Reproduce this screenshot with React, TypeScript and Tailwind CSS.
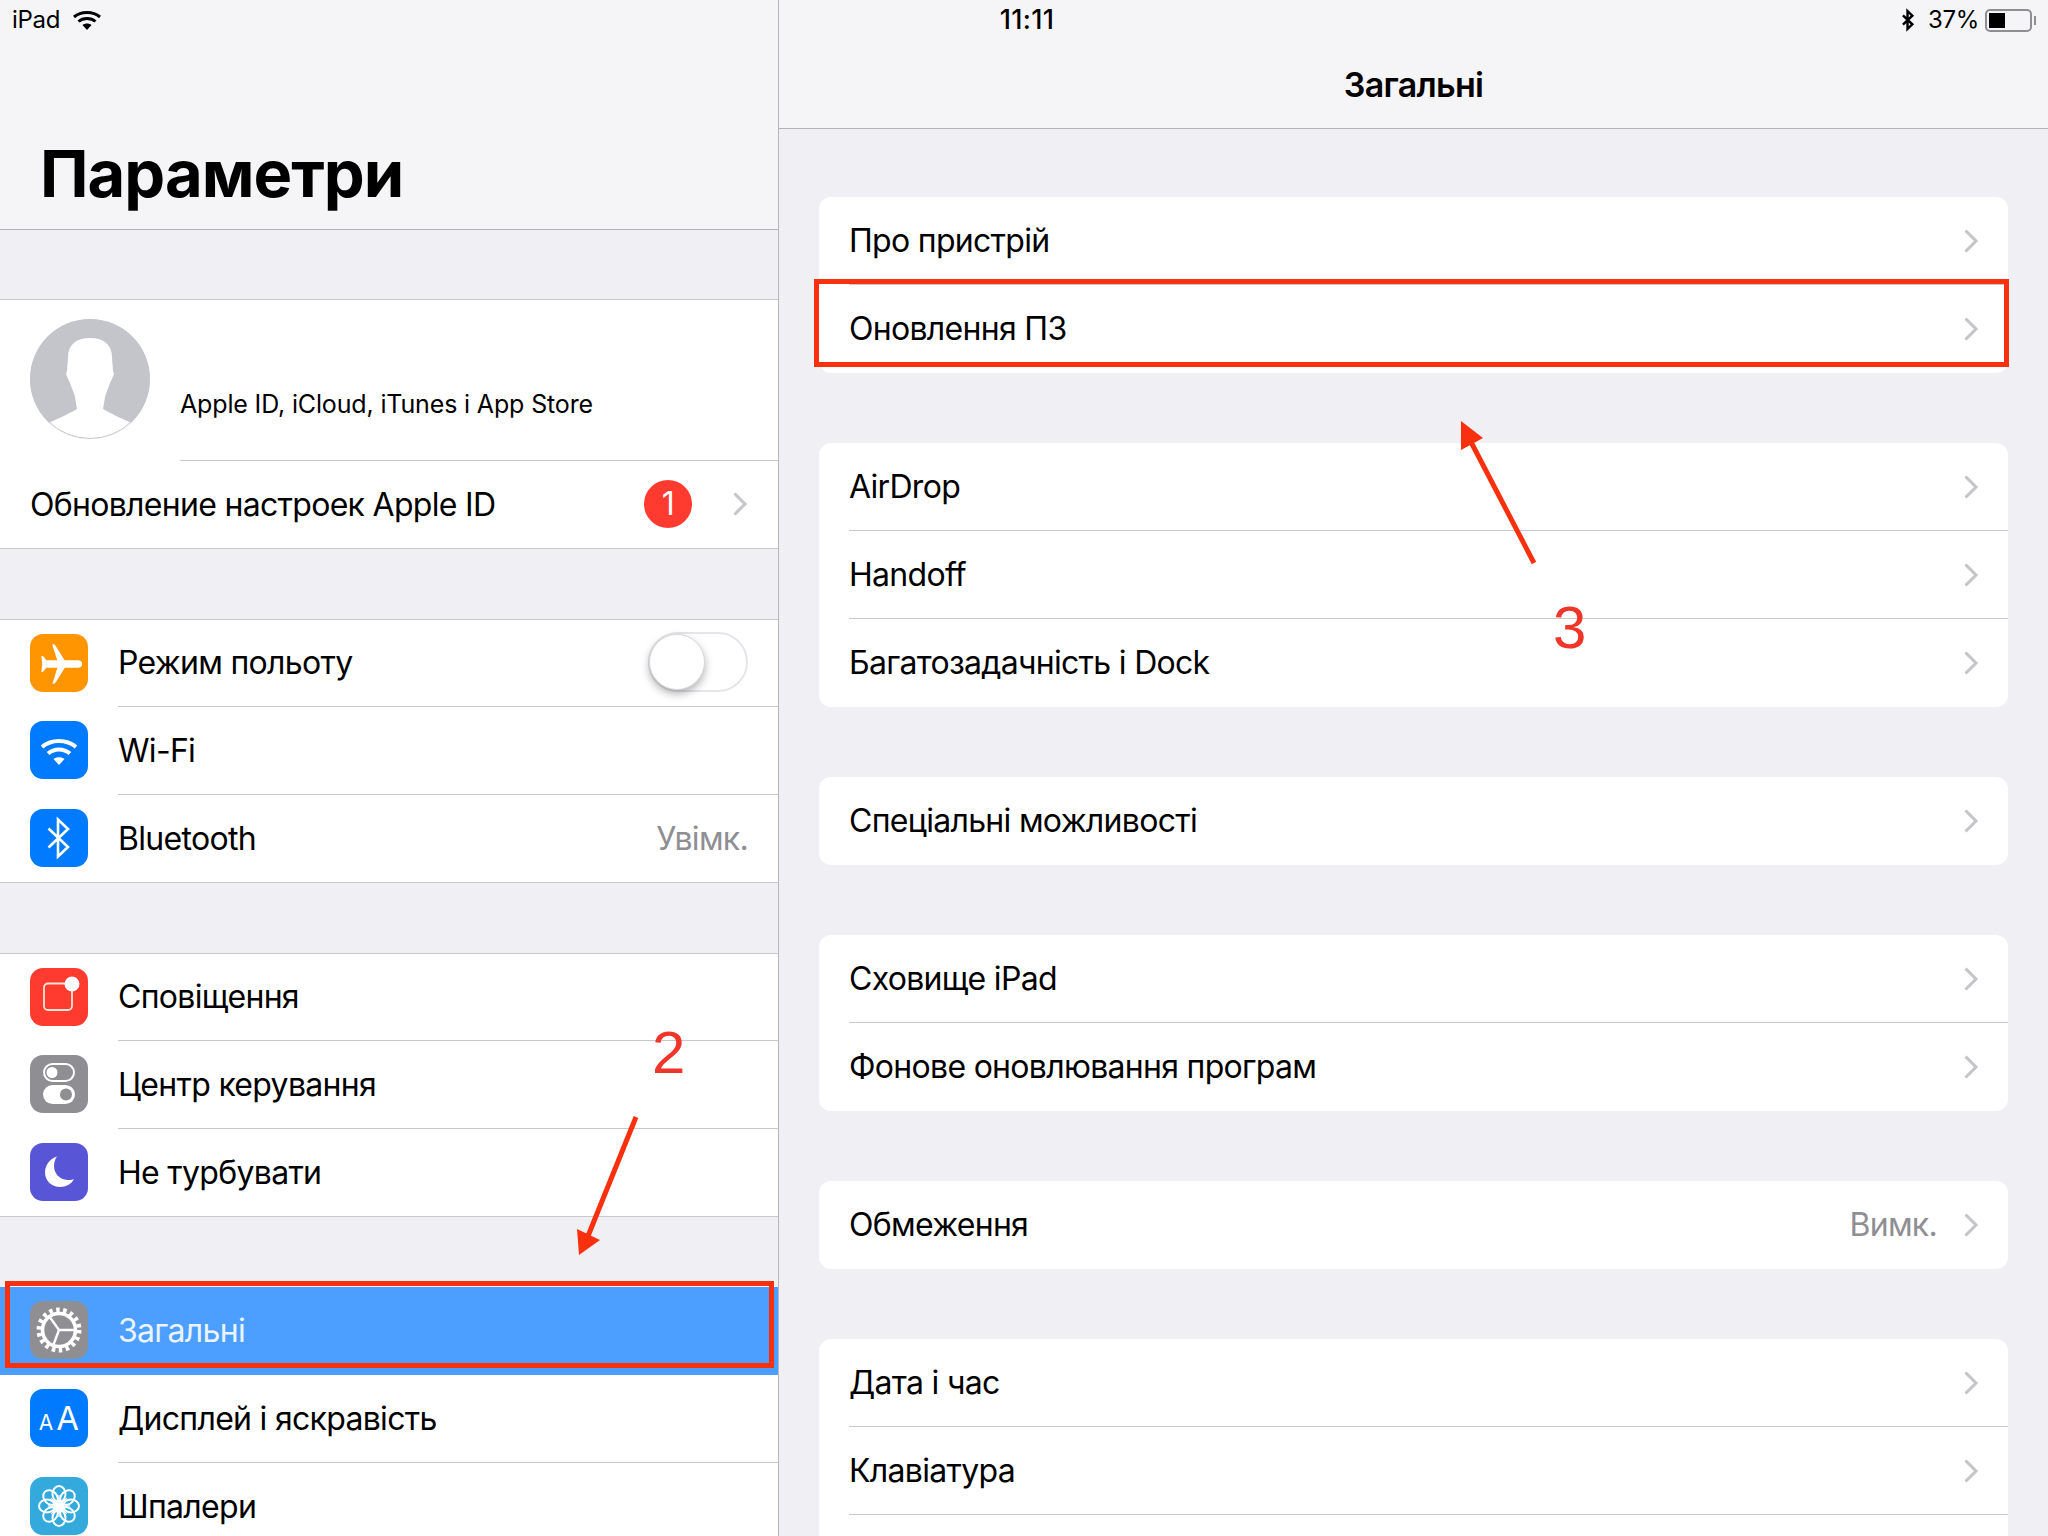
const Chevron = ({ className = "" }: { className?: string }) => (
  <svg width="16" height="26" viewBox="0 0 16 26" fill="none" className={className}>
    <path d="M2.5 2.5 13 13 2.5 23.5" stroke="#c4c4c9" strokeWidth="3" />
  </svg>
);

function Tile({ bg, children }: { bg: string; children: React.ReactNode }) {
  return (
    <div className={`w-[58px] h-[58px] mb-[2px] rounded-[13px] shrink-0 flex items-center justify-center ${bg}`}>
      {children}
    </div>
  );
}

const AirplaneIcon = () => (
  <svg width="58" height="58" viewBox="0 0 58 58" fill="#fff">
    <path d="M52 29c0-1.7-1.9-2.7-4-2.7H34.6L25.3 11.2c-.3-.5-.9-.8-1.5-.8h-1.6l5 15.9H16.4l-3.2-4-.3-.4h-1.6l1 8.1-1 8.1h1.6l3.5-4.4h11l-5 15.9h1.6c.6 0 1.2-.3 1.5-.8l9.3-15.1H48c2.1 0 4-1 4-2.7z" />
  </svg>
);

const WifiIcon = () => (
  <svg width="58" height="58" viewBox="0 0 58 58" fill="none" stroke="#fff" strokeWidth="4">
    <path d="M12 26c9.500-8 24.500-8 34 0" />
    <path d="M18 32.500c6.500-5.500 15.500-5.500 22 0" />
    <path d="M23.500 38 29 44l5.500-6c-3-2.500-8-2.500-11 0z" fill="#fff" stroke="none" />
  </svg>
);

const BluetoothIcon = ({ color = "#fff", size = 58, width = 2.6 }: { color?: string; size?: number; width?: number }) => (
  <svg width={size} height={size} viewBox="0 0 58 58" fill="none" stroke={color} strokeWidth={width}>
    <path d="M18.500 19.500 38 38 28 47.500V10.500L38 20 18.500 38.500" />
  </svg>
);

const BellIcon = () => (
  <svg width="58" height="58" viewBox="0 0 58 58" fill="none">
    <path d="M36 15.500H18a4 4 0 0 0-4 4V38a4 4 0 0 0 4 4h20a4 4 0 0 0 4-4V21" stroke="#ffe4d8" strokeWidth="1.800" />
    <circle cx="42" cy="16" r="7.500" fill="#fff" />
  </svg>
);

const ControlIcon = () => (
  <svg width="58" height="58" viewBox="0 0 58 58" fill="none">
    <rect x="14" y="9" width="30" height="17" rx="8.500" stroke="#fff" strokeWidth="2" />
    <circle cx="22" cy="17.500" r="5.500" fill="#fff" />
    <rect x="13" y="30" width="32" height="19" rx="9.500" fill="#fff" />
    <circle cx="36" cy="39.500" r="6" fill="#8e8e93" />
  </svg>
);

const MoonIcon = () => (
  <svg width="58" height="58" viewBox="0 0 58 58" fill="#fff">
    <path d="M27 13.500C19.500 16 15 22.500 15 29.500c0 9 7.500 14.500 15 14.500 6 0 11.500-2.800 14-8-2 1-4 1.200-6.500 1-8-.5-13.500-6.500-13.500-14 0-3.500 1-7 3-9.500z" />
  </svg>
);

const GearIcon = () => (
  <svg width="58" height="58" viewBox="0 0 58 58" fill="none" stroke="#fff">
    <circle cx="29" cy="29" r="19.500" strokeWidth="6" strokeDasharray="3.400 3.410" />
    <circle cx="29" cy="29" r="16.500" strokeWidth="3.600" />
    <path d="M29 29H46M29 29 19 15M29 29 23 45" strokeWidth="2.400" />
  </svg>
);

const FlowerIcon = () => (
  <svg width="58" height="58" viewBox="0 0 58 58" fill="none" stroke="#fff" strokeWidth="2">
    {[0, 45, 90, 135, 180, 225, 270, 315].map((a) => (
      <g key={a} transform={`rotate(${a} 29 29)`}>
        <ellipse cx="29" cy="17" rx="6.500" ry="8" />
        <path d="M29 25V18" strokeWidth="1.200" />
      </g>
    ))}
    <circle cx="29" cy="29" r="3.500" fill="#fff" stroke="none" />
  </svg>
);

const AaIcon = () => (
  <div className="flex items-baseline text-white leading-none tracking-normal">
    <span className="text-[21px]">A</span>
    <span className="text-[33px] ml-[3px]">A</span>
  </div>
);

function SideRow({
  icon,
  label,
  right,
  h = "h-[88px]",
  last = false,
  selected = false,
}: {
  icon: React.ReactNode;
  label: string;
  right?: React.ReactNode;
  h?: string;
  last?: boolean;
  selected?: boolean;
}) {
  return (
    <div className={`${h} flex items-center pl-[30px] ${selected ? "bg-[#4d9fff]" : ""}`}>
      {icon}
      <div
        className={`ml-[30px] flex-1 h-full flex items-center justify-between pr-[30px] ${
          last ? "" : "border-b border-[#c8c7cc]"
        }`}
      >
        <span className={selected ? "text-[#eaf4ff]" : ""}>{label}</span>
        {right}
      </div>
    </div>
  );
}

function Card({ rows }: { rows: { label: string; value?: string }[] }) {
  return (
    <div className="bg-white rounded-[12px] overflow-hidden">
      {rows.map((r, i) => (
        <div key={i} className="h-[88px] pl-[30px]">
          <div
            className={`h-full flex items-center justify-between pr-[29px] ${
              i < rows.length - 1 ? "border-b border-[#c8c7cc]" : ""
            }`}
          >
            <span>{r.label}</span>
            <div className="flex items-center gap-[26px]">
              {r.value && <span className="text-[#8e8e93]">{r.value}</span>}
              {r.label && <Chevron />}
            </div>
          </div>
        </div>
      ))}
    </div>
  );
}

export default function App() {
  return (
    <div className="relative w-[2048px] h-[1536px] overflow-hidden flex bg-[#efeff4] text-black text-[32px] tracking-[-0.7px] font-['Inter','Noto_Sans',sans-serif]">
      {/* status bar */}
      <div className="absolute top-0 left-0 right-0 h-[40px] grid grid-cols-3 items-center pl-[12px] pr-[12px] text-[24px] tracking-[-0.3px]">
        <div className="flex items-center gap-[12px]">
          <span>iPad</span>
          <svg width="30" height="24" viewBox="0 0 30 24" fill="none" stroke="#000" strokeWidth="3">
            <path d="M2 9c7-6 19-6 26 0" />
            <path d="M6.500 13.500c4.500-4 12.500-4 17 0" />
            <path d="M10.500 17 15 22l4.500-5c-2.500-2-6.500-2-9 0z" fill="#000" stroke="none" />
          </svg>
        </div>
        <span className="font-medium text-[27px] tracking-[0.3px] pl-[313px]">11:11</span>
        <div className="flex items-center justify-end gap-[6px]">
          <BluetoothIcon color="#000" size={28} width={5} />
          <span>37%</span>
          <div className="relative w-[47px] h-[23px] border-2 border-[#8e8e93] rounded-[5px] p-[2px] mr-[4px]">
            <div className="w-[16px] h-full bg-black" />
            <div className="absolute -right-[6px] top-[5px] w-[2px] h-[9px] bg-[#8e8e93]" />
          </div>
        </div>
      </div>

      {/* left pane */}
      <div className="w-[779px] shrink-0 border-r border-[#b5b5ba]">
        <div className="h-[230px] bg-[#f5f5f7] border-b border-[#b2b2b6] flex items-end pl-[40px] pb-[14px]">
          <h1 className="text-[65px] font-bold leading-[82px] tracking-[-1px]">Параметри</h1>
        </div>

        <div className="mt-[69px] bg-white border-y border-[#c8c7cc]">
          <div className="h-[161px] flex pl-[30px] pt-[19px]">
            <svg width="120" height="120" viewBox="0 0 120 120" className="shrink-0 rounded-full bg-[#c4c5cb]">
              <path
                fill="#fff"
                d="M60 19C46 19 38 26 38 38L37 52 36 55C38 60 39 62 40 64 42 70 44 74 45 78L47 90C40 94 30 99 18 104L8 120H112L102 104C90 99 80 94 73 90L75 78C76 74 78 70 80 64 81 62 82 60 84 55L83 52 82 38C82 26 74 19 60 19Z"
              />
              <circle cx="60" cy="60" r="59.500" fill="none" stroke="#c4c5cb" />
            </svg>
            <div className="ml-[30px] flex-1 border-b border-[#c8c7cc] pt-[69px] text-[25px] leading-[32px] tracking-[-0.15px]">
              Apple ID, iCloud, iTunes і App Store
            </div>
          </div>
          <div className="h-[87px] flex items-center justify-between pl-[30px] pr-[30px]">
            <span>Обновление настроек Apple ID</span>
            <div className="flex items-center gap-[40px] mb-[2px]">
              <div className="w-[48px] h-[48px] rounded-full bg-[#ff3b30] text-white flex items-center justify-center text-[32px]">
                1
              </div>
              <Chevron />
            </div>
          </div>
        </div>

        <div className="mt-[70px] bg-white border-y border-[#c8c7cc]">
          <SideRow
            h="h-[87px]"
            icon={<Tile bg="bg-[#ff9500]"><AirplaneIcon /></Tile>}
            label="Режим польоту"
            right={
              <div className="relative w-[100px] h-[60px] mb-[2px] rounded-full border-2 border-[#e6e6ea]">
                <div className="absolute -left-[1px] top-0 w-[56px] h-[56px] rounded-full bg-white border border-[#d8d8dc] shadow-[0_4px_8px_rgba(0,0,0,0.3)]" />
              </div>
            }
          />
          <SideRow icon={<Tile bg="bg-[#007aff]"><WifiIcon /></Tile>} label="Wi-Fi" />
          <SideRow
            h="h-[87px]"
            last
            icon={<Tile bg="bg-[#007aff]"><BluetoothIcon /></Tile>}
            label="Bluetooth"
            right={<span className="text-[#8e8e93]">Увімк.</span>}
          />
        </div>

        <div className="mt-[70px] bg-white border-y border-[#c8c7cc]">
          <SideRow h="h-[87px]" icon={<Tile bg="bg-[#ff3b30]"><BellIcon /></Tile>} label="Сповіщення" />
          <SideRow icon={<Tile bg="bg-[#8e8e93]"><ControlIcon /></Tile>} label="Центр керування" />
          <SideRow h="h-[87px]" last icon={<Tile bg="bg-[#5856d6]"><MoonIcon /></Tile>} label="Не турбувати" />
        </div>

        <div className="mt-[70px] bg-white">
          <SideRow selected last icon={<Tile bg="bg-[#8e8e93]"><GearIcon /></Tile>} label="Загальні" />
          <SideRow icon={<Tile bg="bg-[#007aff]"><AaIcon /></Tile>} label="Дисплей і яскравість" />
          <SideRow icon={<Tile bg="bg-[#34aadc]"><FlowerIcon /></Tile>} label="Шпалери" />
        </div>
      </div>

      {/* right pane */}
      <div className="flex-1">
        <div className="h-[129px] bg-[#f5f5f7] border-b border-[#b2b2b6] flex items-end justify-center pb-[23px]">
          <span className="font-semibold text-[34px] leading-[40px]">Загальні</span>
        </div>
        <div className="pt-[68px] pl-[40px] pr-[40px] flex flex-col gap-[70px]">
          <Card rows={[{ label: "Про пристрій" }, { label: "Оновлення ПЗ" }]} />
          <Card rows={[{ label: "AirDrop" }, { label: "Handoff" }, { label: "Багатозадачність і Dock" }]} />
          <Card rows={[{ label: "Спеціальні можливості" }]} />
          <Card rows={[{ label: "Сховище iPad" }, { label: "Фонове оновлювання програм" }]} />
          <Card rows={[{ label: "Обмеження", value: "Вимк." }]} />
          <Card rows={[{ label: "Дата і час" }, { label: "Клавіатура" }, { label: "" }]} />
        </div>
      </div>

      {/* annotations */}
      <div className="absolute left-[5px] top-[1281px] w-[769px] h-[87px] border-[5px] border-[#f9300e]" />
      <div className="absolute left-[814px] top-[279px] w-[1195px] h-[88px] border-[5px] border-[#f9300e]" />
      <span className="absolute left-[652px] top-[1020px] text-[60px] leading-[66px] tracking-normal text-[#f0352a] font-['Liberation_Sans',sans-serif]">2</span>
      <span className="absolute left-[1553px] top-[595px] text-[60px] leading-[66px] tracking-normal text-[#f0352a] font-['Liberation_Sans',sans-serif]">3</span>
      <svg className="absolute left-0 top-0 pointer-events-none" width="2048" height="1536" fill="#f9300e" stroke="none">
        <path d="M636 1117 588 1236" stroke="#f9300e" strokeWidth="5" />
        <path d="M579 1255 577 1229 600 1240z" />
        <path d="M1534 563 1471 442" stroke="#f9300e" strokeWidth="5" />
        <path d="M1461 421 1483 438 1461 450z" />
      </svg>
    </div>
  );
}
